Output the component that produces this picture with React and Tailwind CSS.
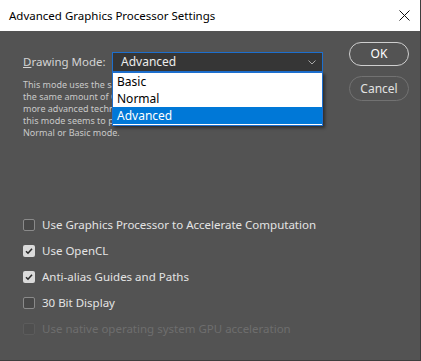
import { useState } from "react";

const font = { fontFamily: '"Noto Sans", "Open Sans", Arial, sans-serif' };

function CheckRow({ label, checked, disabled }) {
  return (
    <div className="flex items-center h-[26px]">
      <div
        className={
          "w-[12px] h-[12px] rounded-[2px] flex items-center justify-center shrink-0 " +
          (disabled
            ? "border border-[#5c5c5c] bg-[#4f4f4f]"
            : checked
            ? "bg-[#dadada]"
            : "border border-[#8a8a8a] bg-[#484848]")
        }
      >
        {checked && (
          <svg width="8" height="8" viewBox="0 0 8 8">
            <path d="M1 4.2 L3 6.2 L7 1.8" fill="none" stroke="#2b2b2b" strokeWidth="1.6" />
          </svg>
        )}
      </div>
      <span className={"ml-[7px] text-[11.5px] whitespace-nowrap " + (disabled ? "text-[#6e6e6e]" : "text-[#e4e4e4]")}>
        {label}
      </span>
    </div>
  );
}

export default function App() {
  const [mode] = useState("Advanced");
  const options = ["Basic", "Normal", "Advanced"];

  return (
    <div style={font} className="w-[421px] h-[361px] bg-[#535353] border-r border-b border-[#3e3e3e] flex flex-col overflow-hidden">
      <div className="h-[31px] bg-white flex items-center justify-between pl-[9px] pr-[10px] shrink-0">
        <span className="text-[11.5px] text-black">Advanced Graphics Processor Settings</span>
        <svg width="11" height="11" viewBox="0 0 11 11">
          <path d="M0.5 0.5 L10.5 10.5 M10.5 0.5 L0.5 10.5" stroke="#111" strokeWidth="1" />
        </svg>
      </div>

      <div className="flex flex-1">
        <div className="flex flex-col pl-[23px] pt-[21px] w-[326px]">
          <div className="flex items-center">
            <span className="text-[11.5px] text-[#d4d4d4] w-[89px] whitespace-nowrap">
              <span className="underline">D</span>rawing Mode:
            </span>
            <div className="relative">
              <div className="w-[211px] h-[20px] border border-[#1d6fce] bg-[#363636] flex items-center justify-between pl-[8px] pr-[6px]">
                <span className="text-[12px] text-[#ececec]">{mode}</span>
                <svg width="8" height="5" viewBox="0 0 8 5">
                  <path d="M0.5 0.5 L4 4 L7.5 0.5" fill="none" stroke="#a8a8a8" strokeWidth="1" />
                </svg>
              </div>
              <div className="absolute left-0 top-[20px] w-[211px] bg-white border border-[#1d6fce] shadow-[2px_2px_3px_rgba(0,0,0,0.45)] z-10 pb-[1px]">
                {options.map((o) => (
                  <div
                    key={o}
                    className={
                      "h-[17px] flex items-center pl-[4px] text-[12px] " +
                      (o === mode ? "bg-[#0078d7] text-white" : "text-black")
                    }
                  >
                    {o}
                  </div>
                ))}
              </div>
            </div>
          </div>

          <div className="mt-[7px] h-[60px] text-[9px] leading-[12px] text-[#c9c9c9] whitespace-nowrap">
            <div>This mode uses the same amount of GPU memory</div>
            <div>the same amount of GPU memory as Normal</div>
            <div>more advanced techniques for drawing</div>
            <div>this mode seems to produce artifacts, try</div>
            <div>Normal or Basic mode.</div>
          </div>

          <div className="flex flex-col mt-[73px]">
            <CheckRow label="Use Graphics Processor to Accelerate Computation" />
            <CheckRow label="Use OpenCL" checked />
            <CheckRow label="Anti-alias Guides and Paths" checked />
            <CheckRow label="30 Bit Display" />
            <CheckRow label="Use native operating system GPU acceleration" disabled />
          </div>
        </div>

        <div className="flex flex-col pl-[23px] pt-[11px] gap-[10px]">
          <button className="w-[60px] h-[24px] rounded-full border-[1.5px] border-[#cfcfcf] text-[12px] text-white">
            OK
          </button>
          <button className="w-[60px] h-[25px] rounded-full border border-[#727272] text-[12px] text-[#e2e2e2]">
            Cancel
          </button>
        </div>
      </div>
    </div>
  );
}
